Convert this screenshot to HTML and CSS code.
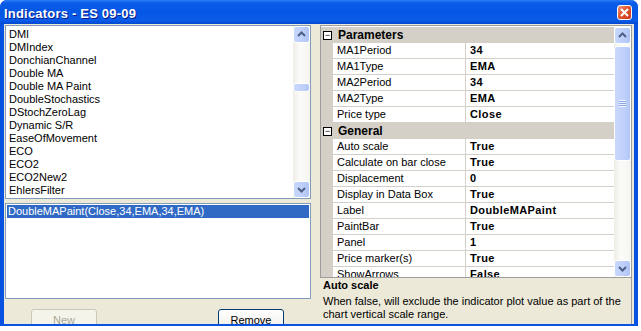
FILE: index.html
```html
<!DOCTYPE html>
<html lang="en">
<head>
  <meta charset="UTF-8">
  <title>Indicators - ES 09-09</title>
  <link rel="stylesheet" href="styles.css">
</head>
<body>
<div class="window">
  <div class="titlebar">
    <span class="title">Indicators - ES 09-09</span>
    <span class="close">
      <svg width="9" height="9" viewBox="0 0 9 9"><path d="M1 1 L8 8 M8 1 L1 8" stroke="#fff" stroke-width="2" fill="none"/></svg>
    </span>
  </div>
  <div class="client">
    <div class="left">
      <div class="listbox indicators">
        <ul class="items">
          <li>DMI</li>
          <li>DMIndex</li>
          <li>DonchianChannel</li>
          <li>Double MA</li>
          <li>Double MA Paint</li>
          <li>DoubleStochastics</li>
          <li>DStochZeroLag</li>
          <li>Dynamic S/R</li>
          <li>EaseOfMovement</li>
          <li>ECO</li>
          <li>ECO2</li>
          <li>ECO2New2</li>
          <li>EhlersFilter</li>
        </ul>
        <div class="vscroll">
          <div class="sbtn"><svg width="15" height="15" viewBox="0 0 15 15"><polyline points="4,9 7.5,5.5 11,9" stroke="#4d6185" stroke-width="2" fill="none"/></svg></div>
          <div class="track"><div class="thumb small"></div></div>
          <div class="sbtn"><svg width="15" height="15" viewBox="0 0 15 15"><polyline points="4,6 7.5,9.5 11,6" stroke="#4d6185" stroke-width="2" fill="none"/></svg></div>
        </div>
      </div>
      <div class="listbox applied">
        <div class="item selected">DoubleMAPaint(Close,34,EMA,34,EMA)</div>
      </div>
      <div class="buttons">
        <button class="btn" disabled>New</button>
        <button class="btn">Remove</button>
      </div>
    </div>
    <div class="right">
      <div class="propgrid">
        <div class="rows">
          <div class="cat"><span class="box">&minus;</span>Parameters</div>
          <div class="prop"><span class="gutter"></span><span class="name">MA1Period</span><span class="value">34</span></div>
          <div class="prop"><span class="gutter"></span><span class="name">MA1Type</span><span class="value">EMA</span></div>
          <div class="prop"><span class="gutter"></span><span class="name">MA2Period</span><span class="value">34</span></div>
          <div class="prop"><span class="gutter"></span><span class="name">MA2Type</span><span class="value">EMA</span></div>
          <div class="prop"><span class="gutter"></span><span class="name">Price type</span><span class="value">Close</span></div>
          <div class="cat"><span class="box">&minus;</span>General</div>
          <div class="prop"><span class="gutter"></span><span class="name">Auto scale</span><span class="value">True</span></div>
          <div class="prop"><span class="gutter"></span><span class="name">Calculate on bar close</span><span class="value">True</span></div>
          <div class="prop"><span class="gutter"></span><span class="name">Displacement</span><span class="value">0</span></div>
          <div class="prop"><span class="gutter"></span><span class="name">Display in Data Box</span><span class="value">True</span></div>
          <div class="prop"><span class="gutter"></span><span class="name">Label</span><span class="value">DoubleMAPaint</span></div>
          <div class="prop"><span class="gutter"></span><span class="name">PaintBar</span><span class="value">True</span></div>
          <div class="prop"><span class="gutter"></span><span class="name">Panel</span><span class="value">1</span></div>
          <div class="prop"><span class="gutter"></span><span class="name">Price marker(s)</span><span class="value">True</span></div>
          <div class="prop"><span class="gutter"></span><span class="name">ShowArrows</span><span class="value">False</span></div>
        </div>
        <div class="vscroll">
          <div class="sbtn"><svg width="15" height="15" viewBox="0 0 15 15"><polyline points="4,9 7.5,5.5 11,9" stroke="#4d6185" stroke-width="2" fill="none"/></svg></div>
          <div class="track"><div class="thumb big"><span class="grip"></span></div></div>
          <div class="sbtn"><svg width="15" height="15" viewBox="0 0 15 15"><polyline points="4,6 7.5,9.5 11,6" stroke="#4d6185" stroke-width="2" fill="none"/></svg></div>
        </div>
      </div>
      <div class="desc">
        <div class="desc-title">Auto scale</div>
        <div class="desc-text">When false, will exclude the indicator plot value as part of the chart vertical scale range.</div>
      </div>
    </div>
  </div>
</div>
</body>
</html>
```

FILE: styles.css
```css
body {
  margin: 0;
  background: #ffffff;
  font-family: "Liberation Sans", Arial, sans-serif;
  font-size: 11px;
  color: #000;
}

.window {
  width: 638px;
  height: 326px;
  background: #0752e0;
  border-radius: 7px 7px 0 0;
  overflow: hidden;
  display: flex;
  flex-direction: column;
}

/* title bar */
.titlebar {
  height: 24px;
  flex: none;
  display: flex;
  align-items: center;
  justify-content: space-between;
  padding: 0 6px 0 4px;
  background: linear-gradient(#2a7cf6 0, #0a5ce8 3px, #0456e4 50%, #0a5ce8 85%, #0447d0 100%);
}
.title {
  color: #fff;
  font-weight: bold;
  font-size: 13px;
  letter-spacing: 0.2px;
  text-shadow: 1px 1px 0 #0a1a8a;
  padding-top: 2px;
}
.close {
  width: 13px;
  height: 13px;
  border: 1px solid #fff;
  border-radius: 3px;
  background: linear-gradient(135deg, #f09a7c 0, #e2562f 45%, #c6381a 100%);
  display: flex;
  align-items: center;
  justify-content: center;
  margin-top: 1px;
}

/* client area */
.client {
  flex: none;
  height: 300px;
  margin: 0 4px;
  padding: 1px 1px 0 1px;
  box-sizing: border-box;
  background: #ece9d8;
  display: flex;
  gap: 9px;
  overflow: hidden;
}

.left {
  width: 306px;
  flex: none;
  display: flex;
  flex-direction: column;
}
.left > * {
  flex: none;
}

.listbox {
  border: 1px solid #7f9db9;
  background: #fff;
  box-sizing: border-box;
}
.indicators {
  height: 174px;
  display: flex;
}
.items {
  list-style: none;
  margin: 0;
  padding: 2px 0 0 3px;
  flex: 1;
  overflow: hidden;
}
.items li {
  height: 13px;
  line-height: 13px;
  white-space: nowrap;
}

.applied {
  height: 96px;
  margin-top: 4px;
  padding: 1px;
}
.item {
  height: 13px;
  line-height: 13px;
  padding-left: 1px;
}
.item.selected {
  background: #316ac5;
  color: #fff;
}

.buttons {
  display: flex;
  margin-top: 10px;
  padding-left: 26px;
  gap: 121px;
}
.btn {
  width: 66px;
  height: 23px;
  font-family: "Liberation Sans", Arial, sans-serif;
  font-size: 11px;
  border: 1px solid #003c74;
  border-radius: 3px;
  background: linear-gradient(#ffffff, #f3f2ec 70%, #e3e1d6);
  color: #000;
  padding: 0 0 2px;
}
.btn:disabled {
  border-color: #c9c7ba;
  background: #f5f4ea;
  color: #aca899;
}

/* scrollbars */
.vscroll {
  width: 17px;
  flex: none;
  display: flex;
  flex-direction: column;
  background: linear-gradient(to right, #eeede5, #fbfbf9 40%, #f6f5f0);
}
.sbtn {
  height: 17px;
  flex: none;
  box-sizing: border-box;
  border: 1px solid #fff;
  border-radius: 3px;
  background: linear-gradient(to right, #c8d7fc, #bccefa 60%, #aec3f5);
  display: flex;
  align-items: center;
  justify-content: center;
}
.track {
  flex: 1;
  position: relative;
}
.thumb {
  position: absolute;
  left: 0;
  right: 0;
  box-sizing: border-box;
  border: 1px solid #fff;
  border-radius: 3px;
  background: linear-gradient(to right, #cad8fc, #bfd0fb 60%, #b1c6f6);
  display: flex;
  align-items: center;
  justify-content: center;
}
.thumb.small {
  top: 40px;
  height: 9px;
}
.thumb.big {
  top: 2px;
  height: 115px;
}
.grip {
  width: 7px;
  height: 7px;
  background: repeating-linear-gradient(#eef3fe 0, #eef3fe 1px, #8ca6e6 1px, #8ca6e6 2px);
}

/* property grid */
.right {
  width: 312px;
  flex: none;
  display: flex;
  flex-direction: column;
}
.right > * {
  flex: none;
}
.propgrid {
  height: 253px;
  border: 1px solid #9d9d9d;
  box-sizing: border-box;
  background: #fff;
  display: flex;
  padding-top: 1px;
}
.rows {
  flex: 1;
  overflow: hidden;
}
.cat {
  height: 16px;
  line-height: 16px;
  background: #d4d0c8;
  font-weight: bold;
  font-size: 12px;
  display: flex;
  align-items: center;
}
.box {
  width: 7px;
  height: 7px;
  border: 1px solid #000;
  background: #fff;
  margin: 0 6px 0 2px;
  font-size: 9px;
  line-height: 6px;
  text-align: center;
  font-weight: normal;
}
.prop {
  height: 16px;
  display: flex;
  line-height: 15px;
}
.gutter {
  width: 12px;
  flex: none;
  background: #d4d0c8;
}
.name {
  width: 128px;
  flex: none;
  padding-left: 4px;
  border-bottom: 1px solid #d4d0c8;
  border-right: 1px solid #d4d0c8;
  white-space: nowrap;
  overflow: hidden;
}
.value {
  flex: 1;
  padding-left: 4px;
  border-bottom: 1px solid #d4d0c8;
  font-weight: bold;
  letter-spacing: 0.4px;
}

.desc {
  height: 46px;
  padding: 0 3px;
  box-sizing: border-box;
  border-right: 1px solid #9d9d9d;
}
.desc-title {
  font-weight: bold;
  line-height: 15px;
  margin-bottom: 2px;
}
.desc-text {
  line-height: 13px;
}
```
